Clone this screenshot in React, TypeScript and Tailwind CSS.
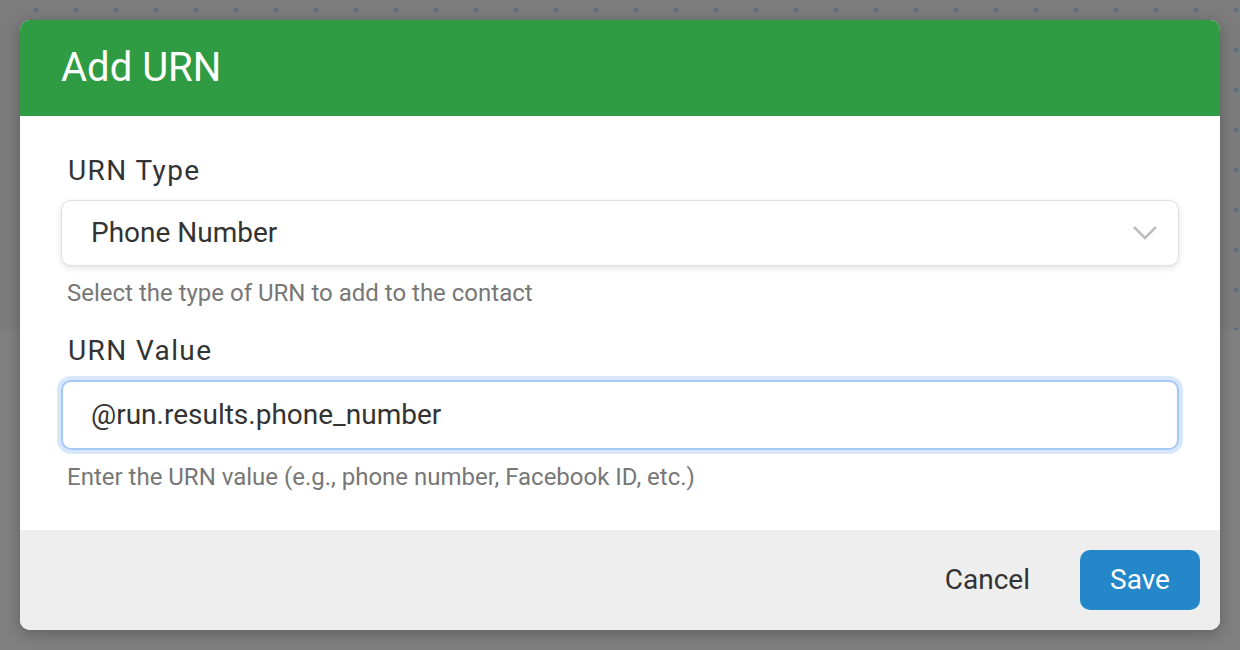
export default function App() {
  const font = { fontFamily: 'Roboto, "Liberation Sans", sans-serif' }

  return (
    <div className="relative h-[650px] w-[1240px] overflow-hidden bg-[#808080]" style={font}>
      {/* page behind the overlay */}
      <div className="h-[330px] bg-[#7c7c7c] bg-[radial-gradient(circle,#5d6f82_2px,transparent_2.5px)] bg-[length:40px_40px] bg-[position:16px_-10px]" />
      <div className="h-[320px] bg-[#808080]" />

      {/* dialog */}
      <div className="absolute left-[20px] top-[20px] flex h-[610px] w-[1200px] flex-col overflow-hidden rounded-[10px] bg-white shadow-[0_4px_16px_rgba(0,0,0,0.25)]">
        <div className="flex h-[96px] items-center bg-[#2f9c44] px-[41px]">
          <h1 className="text-[40px] font-normal leading-none text-white">Add URN</h1>
        </div>

        <div className="flex flex-1 flex-col px-[41px] pt-[39px]">
          <label className="pl-[7px] text-[28px] leading-[32px] tracking-[1.4px] text-[#333]">URN Type</label>
          <div className="mt-[13px] flex h-[66px] items-center justify-between rounded-[10px] border border-[#e0e0e0] bg-white pl-[29px] pr-[20px] shadow-[0_2px_6px_rgba(0,0,0,0.12)]">
            <span className="text-[28px] text-[#333]">Phone Number</span>
            <svg width="26" height="16" viewBox="0 0 26 16" fill="none">
              <path d="M2 2l11 11L24 2" stroke="#bdbdbd" strokeWidth="2.5" />
            </svg>
          </div>
          <p className="mt-[13px] pl-[6px] text-[24px] leading-[28px] text-[#777]">
            Select the type of URN to add to the contact
          </p>

          <label className="mt-[28px] pl-[7px] text-[28px] leading-[32px] tracking-[1.4px] text-[#333]">URN Value</label>
          <div className="mt-[13px] flex h-[70px] items-center rounded-[10px] border-2 border-[#a6c8f7] bg-white pl-[28px] shadow-[0_0_0_4px_#d8e7fc]">
            <span className="text-[28px] text-[#333]">@run.results.phone_number</span>
          </div>
          <p className="mt-[13px] pl-[6px] text-[24px] leading-[28px] text-[#777]">
            Enter the URN value (e.g., phone number, Facebook ID, etc.)
          </p>
        </div>

        <div className="flex h-[100px] items-center justify-end gap-[50px] bg-[#eeeeee] px-[20px]">
          <button className="text-[28px] text-[#333]">Cancel</button>
          <button className="h-[60px] w-[120px] rounded-[10px] bg-[#2387ca] text-[28px] text-white">Save</button>
        </div>
      </div>
    </div>
  )
}
